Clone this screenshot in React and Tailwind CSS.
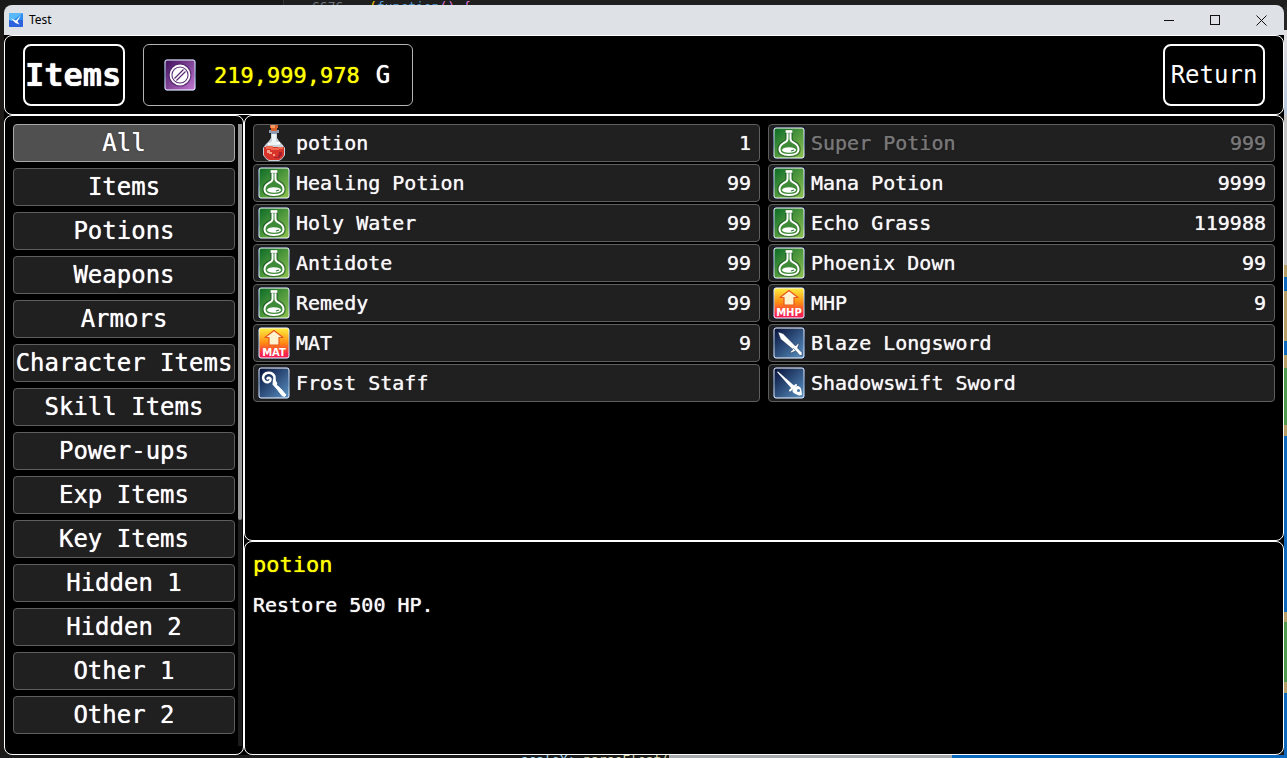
import React, { useState } from "react";

const categories = [
  "All", "Items", "Potions", "Weapons", "Armors", "Character Items", "Skill Items",
  "Power-ups", "Exp Items", "Key Items", "Hidden 1", "Hidden 2", "Other 1", "Other 2",
];

const items = [
  { name: "potion", count: 1, icon: "potion" },
  { name: "Super Potion", count: 999, icon: "flask", disabled: true },
  { name: "Healing Potion", count: 99, icon: "flask" },
  { name: "Mana Potion", count: 9999, icon: "flask" },
  { name: "Holy Water", count: 99, icon: "flask" },
  { name: "Echo Grass", count: 119988, icon: "flask" },
  { name: "Antidote", count: 99, icon: "flask" },
  { name: "Phoenix Down", count: 99, icon: "flask" },
  { name: "Remedy", count: 99, icon: "flask" },
  { name: "MHP", count: 9, icon: "mhp" },
  { name: "MAT", count: 9, icon: "mat" },
  { name: "Blaze Longsword", icon: "sword" },
  { name: "Frost Staff", icon: "staff" },
  { name: "Shadowswift Sword", icon: "rapier" },
];

function Gradients() {
  return (
    <svg className="absolute size-0" aria-hidden="true">
      <defs>
        <linearGradient id="green" x1="0" y1="0" x2="1" y2="1">
          <stop offset="0.1" stopColor="#17732b" />
          <stop offset="1" stopColor="#92c452" />
        </linearGradient>
        <linearGradient id="blue" x1="0" y1="0" x2="1" y2="1">
          <stop offset="0.05" stopColor="#0a1640" />
          <stop offset="1" stopColor="#5b93c4" />
        </linearGradient>
        <linearGradient id="purple" x1="0" y1="0" x2="1" y2="1">
          <stop offset="0.1" stopColor="#4a1a66" />
          <stop offset="1" stopColor="#c478d4" />
        </linearGradient>
        <linearGradient id="fire" x1="0" y1="0" x2="0" y2="1">
          <stop offset="0.05" stopColor="#ffe63c" />
          <stop offset="0.5" stopColor="#ff8a12" />
          <stop offset="0.85" stopColor="#f8284a" />
          <stop offset="1" stopColor="#f01a5c" />
        </linearGradient>
        <linearGradient id="frame" x1="0" y1="0" x2="0" y2="1">
          <stop offset="0" stopColor="#ffffff" />
          <stop offset="0.5" stopColor="#a9c6dc" />
          <stop offset="1" stopColor="#ffffff" />
        </linearGradient>
      </defs>
    </svg>
  );
}

function Tile({ fill, children }) {
  return (
    <svg className="size-8 shrink-0" viewBox="0 0 32 32" aria-hidden="true">
      <rect width="32" height="32" rx="3" fill="#0a1c46" />
      <rect x="1" y="1" width="30" height="30" rx="2" fill={fill} stroke="url(#frame)" />
      {children}
    </svg>
  );
}

function PotionIcon() {
  return (
    <svg className="h-9 w-8 shrink-0" viewBox="0 0 32 36" aria-hidden="true">
      <path d="M13 8h6v5l2 3 3 3 3 4v7l-3 4-3 2H11l-3-2-3-4v-7l3-4 3-3 2-3z" fill="#c9d3dc" />
      <path d="M14 8h4v8l4 4H10l4-4z" fill="#eef3f6" />
      <path d="M12 0h8v3h-1v3h-6V3h-1z" fill="#d9622c" />
      <path d="M13 0h4v3h-4z" fill="#f39a5c" />
      <path d="M11 5h2v1h6V5h2v3h-2v1h-6V8h-2z" fill="#8f9db2" />
      <path d="M6 22h20v8l-2 3-3 2H11l-3-2-2-3z" fill="#d8342c" />
      <path d="M8 21h7v2h5v-1h5v2h-4v1h-8v-1H8z" fill="#f06a50" />
      <path d="M9 25h3v2h2v2h-3v-1H9zM15 29h2v2h-2z" fill="#f9a088" />
      <path d="M21 27h3v4h-2v2h-6v-1h4v-2h1z" fill="#a61f2c" />
      <path d="M10 18h2v2h-2zM19 17h3v2h-3z" fill="#fff" />
    </svg>
  );
}

const flaskOutline =
  "M14.5 6V12C14.5 14.500 12.500 15 10 16.500C7.500 18 6.500 20 6.500 22.500C6.500 26 9 28 16 28S25.500 26 25.500 22.500C25.500 20 24.500 18 22 16.500C19.500 15 17.500 14.500 17.500 12V6";

function FlaskIcon() {
  return (
    <Tile fill="url(#green)">
      <path d={flaskOutline} fill="none" stroke="#134a1d" strokeOpacity="0.6" strokeWidth="4.500" />
      <path d={flaskOutline} fill="#3f8a38" stroke="#fff" strokeWidth="2" />
      <rect x="12.500" y="3" width="7" height="3" rx="0.500" fill="#fff" stroke="#134a1d" strokeOpacity="0.500" strokeWidth="0.500" />
      <ellipse cx="16" cy="23" rx="7" ry="2.800" fill="#fff" />
      <path d="M18 24l3-1" stroke="#2b7a34" strokeWidth="1.300" />
    </Tile>
  );
}

function BoostIcon({ label }) {
  return (
    <Tile fill="url(#fire)">
      <path d="M16 3.500 25 10.500H21V18H11V10.500H7z" fill="#fff3cf" stroke="#e8581c" strokeWidth="1.200" strokeLinejoin="round" />
      <text x="16" y="29" textAnchor="middle" fill="#fff" className="font-['DejaVu_Sans',sans-serif] text-[10px] font-bold [text-shadow:none]">
        {label}
      </text>
    </Tile>
  );
}

function SwordIcon() {
  return (
    <Tile fill="url(#blue)">
      <path d="M5 5l5 1.500L22.500 19l3-3 .5 1-1.500 4 4.500 4.500v3h-2l-4.500-4.500-4.500 2-1-1 3-2.500L7.500 12z" fill="#fff" stroke="#0d2147" strokeWidth="0.500" />
      <path d="M20 21l5 5" stroke="#7d97ba" strokeWidth="1" />
    </Tile>
  );
}

function RapierIcon() {
  return (
    <Tile fill="url(#blue)">
      <path d="M4 5l1-.5L21.500 19 19 22z" fill="#fff" />
      <path d="M17 23.500l6-5.500" stroke="#fff" strokeWidth="2" strokeLinecap="round" />
      <path d="M21 20.500l3-1.500c3 0 4.500 2.500 4.500 5L29 28l-3 .5-4.500-2c-2-1-3-3-.5-6z" fill="#fff" />
      <circle cx="25.500" cy="23.500" r="1.500" fill="#44709f" />
    </Tile>
  );
}

function StaffIcon() {
  return (
    <Tile fill="url(#blue)">
      <path
        d="M9.500 11.500c1-1.500 3.500-.5 3 1.500-.5 2.500-4 3-6 1-2.500-2.500-1.500-7 2.500-8 4-1 8 1.500 7.500 5.500-.2 2 .3 3.500 1.500 5"
        fill="none" stroke="#fff" strokeWidth="2.500" strokeLinecap="round"
      />
      <path d="M15.500 12l2.500 3 .5 3 4 3.500 5.500 6.500-1.500 1.500-2.500-1-5-6.500-4-4.500z" fill="#fff" stroke="#fff" strokeLinejoin="round" />
    </Tile>
  );
}

function CoinIcon() {
  return (
    <Tile fill="url(#purple)">
      <circle cx="16" cy="16" r="11.500" fill="#4b2164" fillOpacity="0.700" />
      <circle cx="16" cy="16" r="9.500" fill="#5c2d78" stroke="#fff" strokeWidth="1.800" />
      <circle cx="16" cy="16" r="7.500" fill="#fff" />
      <path d="M10.500 19.500l9-9M12.500 21.500l9-9" stroke="#54266e" strokeWidth="1.200" />
    </Tile>
  );
}

function ItemIcon({ kind }) {
  switch (kind) {
    case "potion": return <PotionIcon />;
    case "mhp": return <BoostIcon label="MHP" />;
    case "mat": return <BoostIcon label="MAT" />;
    case "sword": return <SwordIcon />;
    case "rapier": return <RapierIcon />;
    case "staff": return <StaffIcon />;
    default: return <FlaskIcon />;
  }
}

function TitleBar() {
  return (
    <div className="flex h-[30px] items-center rounded-t-lg bg-[#dee1e6] pl-[5px]">
      <svg className="size-3.5" viewBox="0 0 14 14" aria-hidden="true">
        <rect width="14" height="14" rx="1" fill="#2c8df0" />
        <path d="M0 7h14v6a1 1 0 0 1-1 1H1a1 1 0 0 1-1-1z" fill="#2d62dd" />
        <path d="M0 0h14L3 8 0 7z" fill="#57b8fa" />
        <path d="M2 5.500l5 2L12 2 8.500 8.500l2 3-4-1.500z" fill="#fff" />
      </svg>
      <span className="ml-1.5 flex-1 font-['Noto_Sans',sans-serif] text-xs text-black">Test</span>
      <div className="flex h-full">
        <button aria-label="Minimize" className="grid w-[46px] place-items-center">
          <svg className="size-[11px]" viewBox="0 0 11 11"><path d="M0 5.500h10" stroke="#111" /></svg>
        </button>
        <button aria-label="Maximize" className="grid w-[46px] place-items-center">
          <svg className="size-[11px]" viewBox="0 0 11 11"><rect x="0.500" y="0.500" width="9" height="9" fill="none" stroke="#111" /></svg>
        </button>
        <button aria-label="Close" className="grid w-[46px] place-items-center">
          <svg className="size-[11px]" viewBox="0 0 11 11"><path d="M0.500 0.500l10 10M10.500 0.500l-10 10" stroke="#111" /></svg>
        </button>
      </div>
    </div>
  );
}

function HeaderBar() {
  return (
    <header className="flex h-20 items-center gap-[18px] rounded-lg border border-white px-[18px] [text-shadow:0_0_1px_currentColor]">
      <h1 className="flex h-[62px] w-[102px] items-center rounded-lg border-2 border-white text-[32px] leading-10 font-bold">Items</h1>
      <div className="flex h-[62px] items-center rounded-md border border-[#b4b4b4] px-5">
        <CoinIcon />
        <span className="ml-[18px] text-[22px] text-[#ffff00]">219,999,978</span>
        <span className="mr-0.5 ml-4 text-2xl">G</span>
      </div>
      <button className="ml-auto h-[62px] w-[102px] rounded-lg border-2 border-white text-2xl">Return</button>
    </header>
  );
}

function Sidebar({ active, onSelect }) {
  return (
    <aside className="flex w-60 shrink-0 gap-[3px] rounded-lg border border-white py-2 pr-px pl-2">
      <nav className="flex flex-1 flex-col gap-1.5">
        {categories.map((name) => (
          <button
            key={name}
            onClick={() => onSelect(name)}
            className={
              "h-[38px] rounded border text-2xl whitespace-nowrap [text-shadow:0_0_1px_currentColor,0_0_2px_#000] " +
              (name === active ? "border-[#a8a8a8] bg-[#505050]" : "border-[#5e5e5e] bg-[#202020]")
            }
          >
            {name}
          </button>
        ))}
      </nav>
      <div className="w-1 bg-[#1c1c1c]">
        <div className="h-[396px] rounded-b-sm bg-[#939393]" />
      </div>
    </aside>
  );
}

function ItemList() {
  return (
    <section aria-label="Inventory" className="flex-1 rounded-lg border border-white p-2">
      <ul className="grid grid-cols-2 gap-x-2 gap-y-0.5">
        {items.map((item) => (
          <li key={item.name}>
            <button
              disabled={item.disabled}
              className="flex h-[38px] w-full items-center gap-1.5 rounded border border-[#5e5e5e] bg-[#202020] pr-2 pl-1 text-xl text-[#f8f8f8] [text-shadow:0_0_1px_currentColor,0_0_2px_#000] disabled:text-[#777777]"
            >
              <ItemIcon kind={item.icon} />
              <span className="flex-1 text-left">{item.name}</span>
              <span>{item.count}</span>
            </button>
          </li>
        ))}
      </ul>
    </section>
  );
}

function Description() {
  return (
    <section aria-label="Description" className="h-[214px] rounded-lg border border-white px-2 py-[3px] [text-shadow:0_0_1px_currentColor]">
      <h2 className="text-[22px] leading-10 text-[#ffff00]">potion</h2>
      <p className="text-xl leading-10 text-[#f8f8f8]">Restore 500 HP.</p>
    </section>
  );
}

function Backdrop() {
  return (
    <div className="flex w-[3px] flex-col">
      <div className="h-[25px] bg-[#262626]" />
      <div className="h-[85px] bg-linear-to-b from-[#e4dfe0] to-[#b8c8de]" />
      <div className="h-[150px] bg-[#c4c4c4]" />
      <div className="h-[12px] bg-[#b7a067]" />
      <div className="h-[14px] bg-[#0e69bd]" />
      <div className="h-[50px] bg-[#b7a067]" />
      <div className="h-[14px] bg-[#0e69bd]" />
      <div className="h-[13px] bg-[#b7a067]" />
      <div className="h-[57px] bg-[#4f9a4e]" />
      <div className="h-[11px] bg-[#b7a067]" />
      <div className="h-[176px] bg-[#0e69bd]" />
      <div className="h-[10px] bg-[#b7a067]" />
      <div className="h-[60px] bg-[#4f9a4e]" />
      <div className="h-[11px] bg-[#b7a067]" />
      <div className="flex-1 bg-[#0e69bd]" />
    </div>
  );
}

export default function App() {
  const [active, setActive] = useState("All");
  return (
    <div className="flex min-h-screen flex-col bg-[#1b1a19] font-['DejaVu_Sans_Mono','Liberation_Mono',monospace] text-white">
      <Gradients />
      <div className="flex h-[5px] overflow-hidden bg-[#1f1f1f] text-[13px] leading-[14px]">
        <div className="w-[284px] shrink-0 border-r border-[#333333] bg-[#191919]" />
        <span className="w-[85px] shrink-0 pl-7 text-[#6e7681]">6676</span>
        <span className="text-[#ffd700]">(</span>
        <span className="text-[#569cd6]">function</span>
        <span className="text-[#da70d6]">()&nbsp;{"{"}</span>
      </div>
      <div className="flex flex-1">
        <div className="w-1 bg-[#1b1a19]" />
        <main className="flex min-w-0 flex-1 flex-col">
          <TitleBar />
          <div className="flex flex-1 flex-col rounded-b-lg bg-black">
            <HeaderBar />
            <div className="flex flex-1">
              <Sidebar active={active} onSelect={setActive} />
              <div className="flex min-w-0 flex-1 flex-col">
                <ItemList />
                <Description />
              </div>
            </div>
          </div>
        </main>
        <Backdrop />
      </div>
      <div className="flex h-[3px] overflow-hidden text-[13px] leading-[10px]">
        <div className="flex w-[52%] justify-end bg-[#1b1b1b]">
          <span className="text-[#9cdcfe]">scaleX:&nbsp;</span>
          <span className="text-[#dcdcaa]">parseFloat(</span>
        </div>
        <div className="w-[22%] bg-[#a6a9ab]" />
        <div className="flex-1 bg-[#0e69bd]" />
      </div>
    </div>
  );
}
